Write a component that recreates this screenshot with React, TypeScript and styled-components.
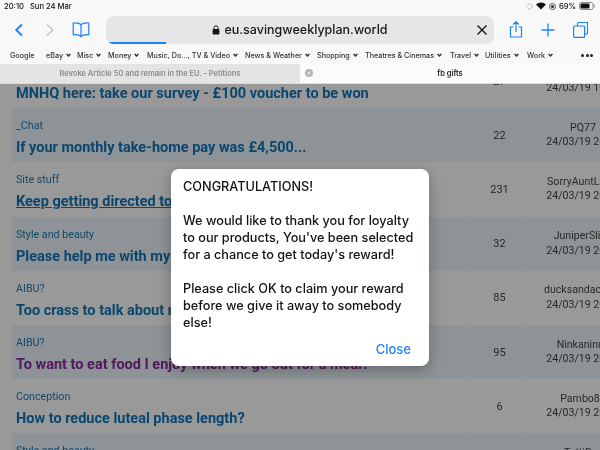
import React from "react";
import styled, { createGlobalStyle } from "styled-components";

const GlobalStyle = createGlobalStyle`
  html, body {
    margin: 0;
    padding: 0;
    width: 600px;
    height: 450px;
    overflow: hidden;
    background: #fff;
  }
`;

const BLUE = "#1a84f5";

const bookmarks = [
  { label: "Google", width: 36 },
  { label: "eBay", width: 31, menu: true },
  { label: "Misc", width: 31, menu: true },
  { label: "Money", width: 39, menu: true },
  { label: "Music, Do..., TV & Video", width: 98, menu: true },
  { label: "News & Weather", width: 72, menu: true },
  { label: "Shopping", width: 48, menu: true },
  { label: "Theatres & Cinemas", width: 85, menu: true },
  { label: "Travel", width: 35, menu: true },
  { label: "Utilities", width: 42, menu: true },
  { label: "Work", width: 54, menu: true },
];

const threads = [
  { category: "", title: "MNHQ here: take our survey - £100 voucher to be won", count: "27", author: "", date: "24/03/19 19:58", tinted: false },
  { category: "_Chat", title: "If your monthly take-home pay was £4,500...", count: "22", author: "PQ77", date: "24/03/19 20:08", tinted: true },
  { category: "Site stuff", title: "Keep getting directed to this page", count: "231", author: "SorryAuntLulus", date: "24/03/19 20:07", underlined: true, tinted: false },
  { category: "Style and beauty", title: "Please help me with my hair", count: "32", author: "JuniperSlipp", date: "24/03/19 20:07", tinted: true },
  { category: "AIBU?", title: "Too crass to talk about money?", count: "85", author: "ducksandacorns", date: "24/03/19 20:06", tinted: false },
  { category: "AIBU?", title: "To want to eat food I enjoy when we go out for a meal?", count: "95", author: "Ninkaninus", date: "24/03/19 20:06", visited: true, tinted: true },
  { category: "Conception", title: "How to reduce luteal phase length?", count: "6", author: "Pambo87", date: "24/03/19 20:05", tinted: false },
  { category: "Style and beauty", title: "Best foundation for dry skin", count: "14", author: "TattiBye", date: "24/03/19 20:05", tinted: true },
];

const Page = styled.div`
  width: 600px;
  height: 450px;
  display: flex;
  flex-direction: column;
  overflow: hidden;
  font-family: Inter, "Liberation Sans", sans-serif;
  filter: blur(0.3px);
`;

const Chrome = styled.header`
  flex: none;
  height: 83px;
  background: #f8f8f8;
  display: flex;
  flex-direction: column;
`;

const StatusBar = styled.div`
  height: 12px;
  padding: 0 5px 0 4px;
  display: flex;
  align-items: center;
  justify-content: space-between;
  font-size: 7.6px;
  font-weight: 500;
  color: #111;
`;

const StatusGroup = styled.div`
  display: flex;
  align-items: center;
  gap: 3px;
`;

const Day = styled.span`
  margin-left: 6px;
`;

const Toolbar = styled.div`
  height: 31px;
  margin-top: 2px;
  display: flex;
  align-items: center;
`;

const IconButton = styled.div<{ $width: number }>`
  width: ${(p) => p.$width}px;
  flex: none;
  display: flex;
  align-items: center;
  justify-content: center;
`;

const UrlBar = styled.div`
  position: relative;
  flex: none;
  width: 388px;
  height: 28px;
  margin-left: 7px;
  border-radius: 8px;
  background: #e6e6e9;
  display: flex;
  align-items: center;
  justify-content: center;
  gap: 4px;
  font-size: 12.5px;
  font-weight: 500;
  color: #161616;
  overflow: hidden;
`;

const Progress = styled.div`
  position: absolute;
  left: 3px;
  bottom: 0;
  width: 57px;
  height: 2px;
  background: ${BLUE};
`;

const ClearIcon = styled.svg`
  position: absolute;
  right: 6px;
  top: 8px;
`;

const BookmarkBar = styled.div`
  height: 18px;
  margin-top: 1px;
  padding-left: 10px;
  display: flex;
  align-items: center;
  font-size: 7.2px;
  font-weight: 500;
  color: #333;
  white-space: nowrap;
`;

const Bookmark = styled.div<{ $width: number }>`
  width: ${(p) => p.$width}px;
  flex: none;
  display: flex;
  align-items: center;
  gap: 3px;
`;

const MoreDots = styled.div`
  flex: none;
  display: flex;
  gap: 1.5px;
`;

const Dot = styled.i`
  width: 3px;
  height: 3px;
  border-radius: 50%;
  background: #222;
`;

const Tabs = styled.div`
  height: 19px;
  display: grid;
  grid-template-columns: 300px 300px;
  font-size: 7.5px;
  font-weight: 600;
`;

const Tab = styled.div<{ $active?: boolean }>`
  position: relative;
  display: flex;
  align-items: center;
  justify-content: center;
  background: ${(p) => (p.$active ? "#fbfbfb" : "#e4e4e4")};
  color: ${(p) => (p.$active ? "#1c1c1c" : "#8a8a8e")};
`;

const TabClose = styled.svg`
  position: absolute;
  left: 5px;
  top: 5px;
`;

const Content = styled.main`
  position: relative;
  flex: 1;
  overflow: hidden;
  background: #fff;
  border-top: 1px solid #dcdcdc;
`;

const ThreadList = styled.div`
  margin-top: -30px;
  width: 640px;
`;

const Row = styled.div<{ $tinted?: boolean }>`
  height: 54.2px;
  margin-left: 12px;
  display: grid;
  grid-template-columns: 459px 57px 110px;
  background: ${(p) => (p.$tinted ? "#ebf5fa" : "transparent")};
  color: #444;
`;

const TitleCell = styled.div`
  padding: 11px 0 0 4px;
  font-family: Roboto, "Liberation Sans", sans-serif;
  white-space: nowrap;
`;

const Category = styled.div`
  font-size: 10.7px;
  line-height: 14px;
  color: #217ab4;
`;

const Title = styled.div<{ $visited?: boolean; $underlined?: boolean }>`
  margin-top: 5px;
  font-size: 14.5px;
  line-height: 20px;
  font-weight: 700;
  color: ${(p) => (p.$visited ? "#8c2a9e" : "#1176b8")};
  text-decoration: ${(p) => (p.$underlined ? "underline" : "none")};
`;

const CountCell = styled.div<{ $tinted?: boolean }>`
  display: flex;
  align-items: center;
  justify-content: center;
  font-family: Roboto, "Liberation Sans", sans-serif;
  font-size: 11px;
  border-left: 1px solid ${(p) => (p.$tinted ? "#f6fbfe" : "transparent")};
  border-right: 1px solid ${(p) => (p.$tinted ? "#f6fbfe" : "transparent")};
`;

const AuthorCell = styled.div`
  display: flex;
  flex-direction: column;
  align-items: center;
  justify-content: center;
  font-family: Roboto, "Liberation Sans", sans-serif;
  font-size: 10.6px;
  line-height: 14.5px;
  white-space: nowrap;
`;

const Overlay = styled.div`
  position: absolute;
  inset: 0;
  background: rgba(0, 0, 0, 0.4);
  display: flex;
  align-items: center;
  justify-content: center;
`;

const Dialog = styled.div`
  width: 258px;
  height: 197px;
  box-sizing: border-box;
  padding: 9px 12px 0;
  background: #fff;
  border-radius: 8px;
  box-shadow: 0 4px 14px rgba(0, 0, 0, 0.28);
  display: flex;
  flex-direction: column;
`;

const Message = styled.div`
  flex: 1;
  font-size: 12.7px;
  line-height: 17px;
  font-weight: 500;
  color: #111;
`;

const Gap = styled.div`
  height: 17px;
`;

const CloseButton = styled.div`
  align-self: flex-end;
  margin: 0 6px 8px 0;
  font-size: 13px;
  line-height: 18px;
  font-weight: 500;
  color: ${BLUE};
`;

const Caret = () => (
  <svg width="5" height="4" viewBox="0 0 5 4" fill="none">
    <path d="M.6.8 2.5 3 4.4.8" stroke="#222" strokeWidth="1.3" />
  </svg>
);

const Battery = () => (
  <svg width="16" height="8" viewBox="0 0 16 8" fill="none">
    <rect x=".5" y=".5" width="13.5" height="7" rx="2" stroke="#888" />
    <rect x="1.5" y="1.5" width="9" height="5" rx="1" fill="#111" />
    <rect x="14.7" y="2.6" width="1" height="2.8" rx=".5" fill="#888" />
  </svg>
);

export default function App() {
  return (
    <Page>
      <GlobalStyle />
      <Chrome>
        <StatusBar>
          <span>
            20:10<Day>Sun 24 Mar</Day>
          </span>
          <StatusGroup>
            <svg width="7" height="7" viewBox="0 0 7 7" fill="none">
              <circle cx="3.5" cy="3.5" r="2.5" stroke="#aaa" strokeWidth="1" strokeDasharray="1.5 .8" />
            </svg>
            <svg width="10" height="8" viewBox="0 0 10 8">
              <path d="M5 7.6 0 2.6C2.8-.2 7.2-.2 10 2.6Z" fill="#111" />
            </svg>
            <svg width="7" height="7" viewBox="0 0 7 7" fill="none">
              <circle cx="3.5" cy="3.5" r="3" stroke="#333" strokeWidth=".8" />
              <circle cx="3.5" cy="3.5" r="1.6" fill="#333" />
            </svg>
            <span>69%</span>
            <Battery />
          </StatusGroup>
        </StatusBar>
        <Toolbar>
          <IconButton $width={37}>
            <svg width="10" height="14" viewBox="0 0 10 14" fill="none">
              <path d="M8 1.5 2.2 7 8 12.5" stroke={BLUE} strokeWidth="1.8" />
            </svg>
          </IconButton>
          <IconButton $width={26}>
            <svg width="10" height="14" viewBox="0 0 10 14" fill="none">
              <path d="M2 1.5 7.800 7 2 12.5" stroke="#c4c4c6" strokeWidth="1.6" />
            </svg>
          </IconButton>
          <IconButton $width={36}>
            <svg width="18" height="16" viewBox="0 0 18 16" fill="none">
              <path
                d="M9 3C8 1.600 5.500.8 1.200 1v11.600c4.300-.2 6.800.6 7.800 2 1-1.400 3.500-2.200 7.800-2V1C12.500.8 10 1.600 9 3Zm0 0v12"
                stroke={BLUE}
                strokeWidth="1.2"
              />
            </svg>
          </IconButton>
          <UrlBar>
            <svg width="8" height="10" viewBox="0 0 8 10">
              <path d="M2 4V2.800a2 2 0 0 1 4 0V4" stroke="#161616" fill="none" />
              <rect x=".6" y="4" width="6.800" height="5.500" rx="1" fill="#161616" />
            </svg>
            <span>eu.savingweeklyplan.world</span>
            <ClearIcon width="12" height="12" viewBox="0 0 12 12" fill="none">
              <path d="M1.500 1.500l9 9M10.500 1.500l-9 9" stroke="#161616" strokeWidth="1.400" />
            </ClearIcon>
            <Progress />
          </UrlBar>
          <IconButton $width={44}>
            <svg width="14" height="17" viewBox="0 0 14 17" fill="none">
              <path d="M4.500 6H1.500v10h11V6H9.500M7 11V1M4 3.500 7 .8l3 2.700" stroke={BLUE} strokeWidth="1.200" />
            </svg>
          </IconButton>
          <IconButton $width={20}>
            <svg width="14" height="14" viewBox="0 0 14 14" fill="none">
              <path d="M7 .5v13M.5 7h13" stroke={BLUE} strokeWidth="1.300" />
            </svg>
          </IconButton>
          <IconButton $width={46}>
            <svg width="16" height="16" viewBox="0 0 16 16" fill="none">
              <path d="M4.500 4V1.500a1 1 0 0 1 1-1h9v10.500a1 1 0 0 1-1 1H11.500" stroke={BLUE} strokeWidth="1.100" />
              <rect x=".6" y="4" width="11" height="11.400" rx="1" stroke={BLUE} strokeWidth="1.200" />
            </svg>
          </IconButton>
        </Toolbar>
        <BookmarkBar>
          {bookmarks.map((b) => (
            <Bookmark key={b.label} $width={b.width}>
              {b.label}
              {b.menu && <Caret />}
            </Bookmark>
          ))}
          <MoreDots>
            <Dot />
            <Dot />
            <Dot />
          </MoreDots>
        </BookmarkBar>
        <Tabs>
          <Tab>Revoke Article 50 and remain in the EU. - Petitions</Tab>
          <Tab $active>
            <TabClose width="8" height="8" viewBox="0 0 8 8">
              <circle cx="4" cy="4" r="4" fill="#b4b4b4" />
              <path d="M2.500 2.500l3 3M5.500 2.500l-3 3" stroke="#f4f4f4" strokeWidth=".8" />
            </TabClose>
            fb gifts
          </Tab>
        </Tabs>
      </Chrome>
      <Content>
        <ThreadList>
          {threads.map((t, i) => (
            <Row key={i} $tinted={t.tinted}>
              <TitleCell>
                <Category>{t.category || "\u00a0"}</Category>
                <Title $visited={t.visited} $underlined={t.underlined}>
                  {t.title}
                </Title>
              </TitleCell>
              <CountCell $tinted={t.tinted}>{t.count}</CountCell>
              <AuthorCell>
                <span>{t.author || "\u00a0"}</span>
                <span>{t.date}</span>
              </AuthorCell>
            </Row>
          ))}
        </ThreadList>
        <Overlay>
          <Dialog>
            <Message>
              CONGRATULATIONS!
              <Gap />
              We would like to thank you for loyalty to our products, You've been selected for a chance to get today's reward!
              <Gap />
              Please click OK to claim your reward before we give it away to somebody else!
            </Message>
            <CloseButton>Close</CloseButton>
          </Dialog>
        </Overlay>
      </Content>
    </Page>
  );
}
